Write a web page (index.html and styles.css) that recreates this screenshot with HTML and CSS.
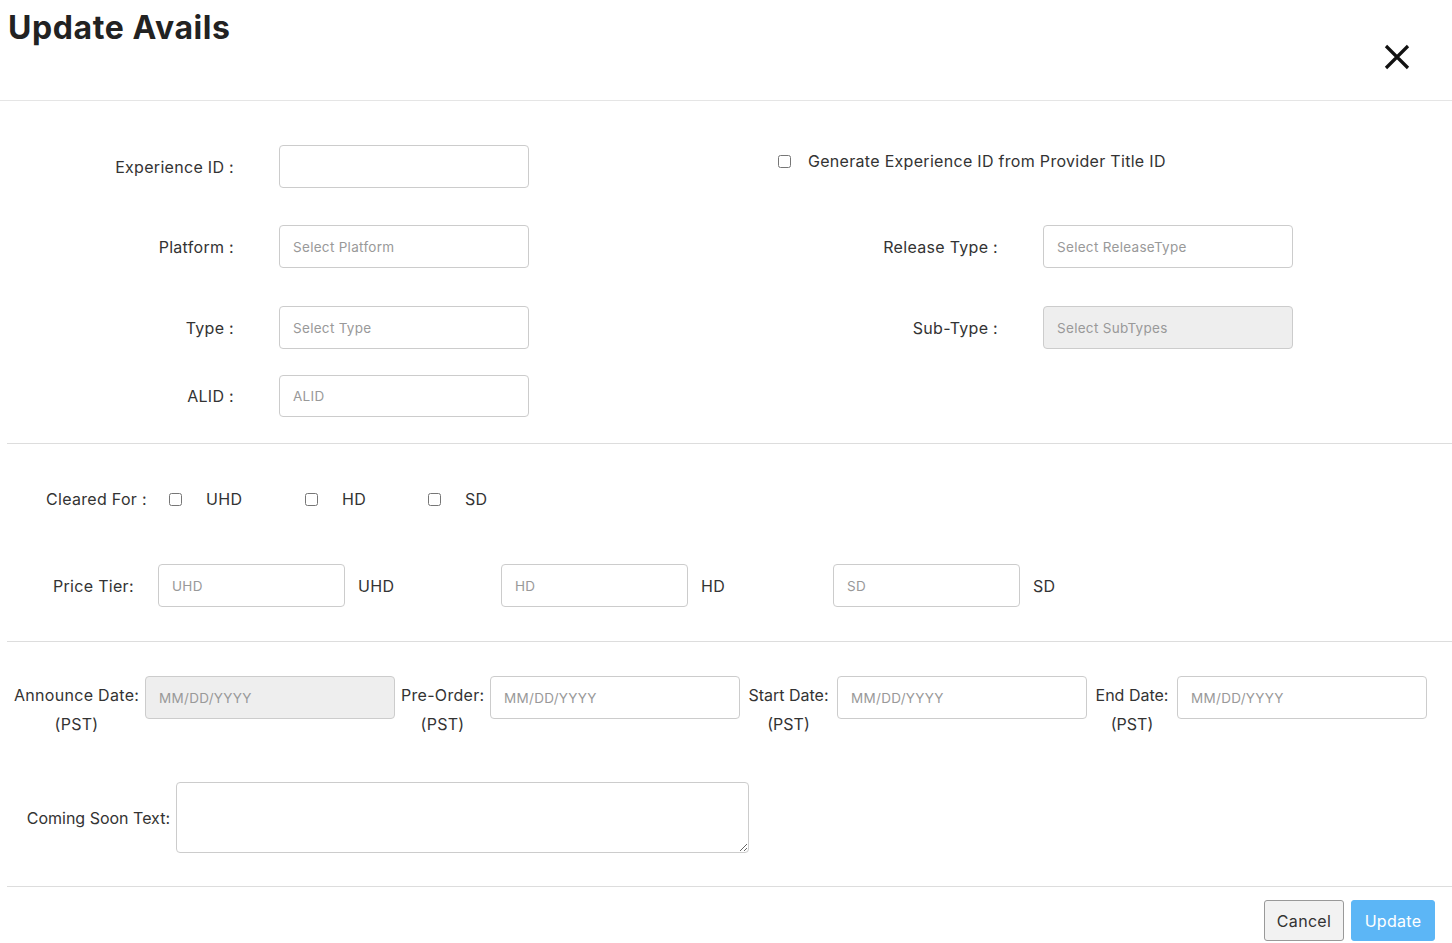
FILE: index.html
```html
<!DOCTYPE html>
<html lang="en">
<head>
  <meta charset="UTF-8" />
  <title>Update Avails</title>
  <link rel="stylesheet" href="styles.css">
</head>
<body>

<div class="modal">
  <div class="modal-header">
    <h2>Update Avails</h2>
    <button class="close-btn" aria-label="Close">
      <svg width="26" height="26" viewBox="0 0 26 26">
        <path d="M2 2 L24 24 M24 2 L2 24" stroke="#111" stroke-width="3.2" fill="none"/>
      </svg>
    </button>
  </div>

  <div class="modal-body">
    <!-- experience / platform / type -->
    <div class="section info-section">
      <div class="info-row row-1">
        <label class="field-label">Experience ID :</label>
        <input type="text" class="field">
        <div class="generate-check">
          <input type="checkbox" id="genId">
          <label for="genId">Generate Experience ID from Provider Title ID</label>
        </div>
      </div>
      <div class="info-row row-2">
        <label class="field-label">Platform :</label>
        <input type="text" class="field" placeholder="Select Platform">
        <label class="field-label">Release Type :</label>
        <input type="text" class="field" placeholder="Select ReleaseType">
      </div>
      <div class="info-row row-3">
        <label class="field-label">Type :</label>
        <input type="text" class="field" placeholder="Select Type">
        <label class="field-label">Sub-Type :</label>
        <input type="text" class="field" placeholder="Select SubTypes" disabled>
      </div>
      <div class="info-row row-4">
        <label class="field-label">ALID :</label>
        <input type="text" class="field alid" placeholder="ALID">
      </div>
    </div>

    <!-- cleared for / price tier -->
    <div class="section quality-section">
      <div class="cleared-row">
        <span class="cleared-label">Cleared For :</span>
        <label class="check-item ci-uhd"><input type="checkbox"><span>UHD</span></label>
        <label class="check-item ci-hd"><input type="checkbox"><span>HD</span></label>
        <label class="check-item"><input type="checkbox"><span>SD</span></label>
      </div>
      <div class="price-row">
        <span class="price-label">Price Tier:</span>
        <input type="text" class="field price" placeholder="UHD"><span class="price-name pn-uhd">UHD</span>
        <input type="text" class="field price" placeholder="HD"><span class="price-name pn-hd">HD</span>
        <input type="text" class="field price" placeholder="SD"><span class="price-name">SD</span>
      </div>
    </div>

    <!-- dates -->
    <div class="section date-section">
      <div class="date-row">
        <div class="date-label announce">Announce Date:<br>(PST)</div>
        <input type="text" class="field date" placeholder="MM/DD/YYYY" disabled>
        <div class="date-label preorder">Pre-Order:<br>(PST)</div>
        <input type="text" class="field date" placeholder="MM/DD/YYYY">
        <div class="date-label start narrow">Start Date:<br>(PST)</div>
        <input type="text" class="field date" placeholder="MM/DD/YYYY">
        <div class="date-label end narrow">End Date:<br>(PST)</div>
        <input type="text" class="field date" placeholder="MM/DD/YYYY">
      </div>
      <div class="soon-row">
        <label class="soon-label narrow">Coming Soon Text:</label>
        <textarea class="soon-text"></textarea>
      </div>
    </div>

    <div class="modal-footer">
      <button class="btn btn-cancel">Cancel</button>
      <button class="btn btn-update">Update</button>
    </div>
  </div>
</div>

</body>
</html>
```

FILE: styles.css
```css
body {
  margin: 0;
  font-family: 'Inter', 'Noto Sans', sans-serif;
  color: #333;
  background: #fff;
  font-size: 16px;
  letter-spacing: 0.3px;
}

.modal-header {
  height: 100px;
  border-bottom: 1px solid #e5e5e5;
  display: flex;
  justify-content: space-between;
  align-items: flex-start;
}

.modal-header h2 {
  margin: 8px 0 0 8px;
  font-size: 32px;
  line-height: 40px;
  font-weight: 700;
  color: #222;
  letter-spacing: 0.6px;
}

.close-btn {
  background: none;
  border: none;
  padding: 0;
  margin: 44px 42px 0 0;
  cursor: pointer;
  width: 26px;
  height: 26px;
}

.modal-body {
  padding-left: 7px;
}

.section {
  border-bottom: 1px solid #ddd;
}

.field {
  box-sizing: border-box;
  height: 43px;
  border: 1px solid #ccc;
  border-radius: 4px;
  padding: 0 13px;
  font-family: inherit;
  font-size: 13.5px;
  letter-spacing: 0.3px;
  color: #333;
  background: #fff;
  margin: 0;
}

.field::placeholder {
  color: #999;
}

.field:disabled {
  background: #eee;
}

/* info section */
.info-section {
  padding: 44px 0 26px;
}

.info-row {
  display: grid;
  grid-template-columns: 227px 250px 424px 250px;
  column-gap: 45px;
  align-items: center;
}

.row-2 { margin-top: 37px; }
.row-3 { margin-top: 38px; }
.row-4 { margin-top: 26px; }

.row-4 .field { height: 42px; }

.field-label {
  text-align: right;
}

.generate-check {
  grid-column: 3 / 5;
  align-self: start;
  margin-top: 6px;
  padding-left: 204px;
  display: flex;
  align-items: center;
}

.generate-check input {
  margin: 0 17px 0 0;
  width: 13px;
  height: 13px;
}

/* cleared / price */
.quality-section {
  padding: 45px 0 34px;
}

.cleared-row {
  display: flex;
  align-items: center;
  height: 20px;
  padding-left: 39px;
}

.cleared-label {
  width: 123px;
}

.check-item {
  display: flex;
  align-items: center;
}

.check-item input {
  margin: 0 24px 0 0;
  width: 13px;
  height: 13px;
}

.ci-uhd { width: 136px; }
.ci-hd { width: 123px; }

.price-row {
  display: flex;
  align-items: center;
  margin-top: 55px;
  padding-left: 46px;
}

.price-label {
  width: 105px;
}

.field.price {
  width: 187px;
  margin-right: 13px;
}

.pn-uhd { width: 143px; }
.pn-hd { width: 132px; }

/* dates */
.date-section {
  padding: 34px 0 33px;
}

.date-row {
  display: flex;
  align-items: flex-start;
  gap: 6px;
  padding-left: 7px;
}

.date-label {
  text-align: center;
  line-height: 29px;
  padding-top: 5px;
  white-space: nowrap;
}

.announce { width: 125px; }
.preorder { width: 83px; }
.start { width: 85px; }
.end { width: 78px; }

.field.date {
  width: 250px;
}

.narrow {
  letter-spacing: 0;
}

.soon-row {
  display: flex;
  align-items: center;
  gap: 6px;
  margin-top: 43px;
}

.soon-label {
  width: 163px;
  text-align: right;
}

.soon-text {
  box-sizing: border-box;
  width: 573px;
  height: 71px;
  border: 1px solid #ccc;
  border-radius: 4px;
  margin: 0;
  font-family: inherit;
}

/* footer */
.modal-footer {
  display: flex;
  justify-content: flex-end;
  gap: 7px;
  padding: 13px 17px 0 0;
}

.btn {
  height: 41px;
  border-radius: 3px;
  font-family: inherit;
  font-size: 16px;
  letter-spacing: 0.3px;
  cursor: pointer;
}

.btn-cancel {
  width: 80px;
  background: #f2f2f2;
  border: 1px solid #999;
  color: #333;
}

.btn-update {
  width: 84px;
  background: #5cb6f6;
  border: 1px solid #5cb6f6;
  color: #fff;
}
```
